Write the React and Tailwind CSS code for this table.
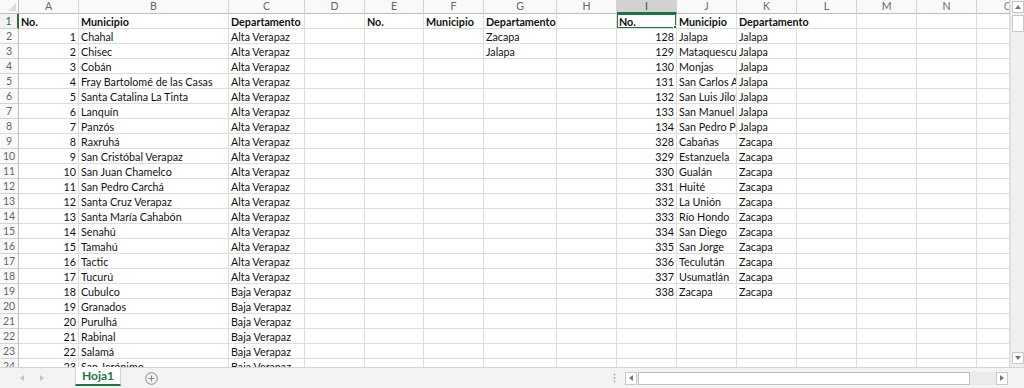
import React from "react";

const COLS = ["A","B","C","D","E","F","G","H","I","J","K","L","M","N","O"];

const left = [
  ["Chahal","Alta Verapaz"],["Chisec","Alta Verapaz"],["Cobán","Alta Verapaz"],
  ["Fray Bartolomé de las Casas","Alta Verapaz"],["Santa Catalina La Tinta","Alta Verapaz"],
  ["Lanquín","Alta Verapaz"],["Panzós","Alta Verapaz"],["Raxruhá","Alta Verapaz"],
  ["San Cristóbal Verapaz","Alta Verapaz"],["San Juan Chamelco","Alta Verapaz"],
  ["San Pedro Carchá","Alta Verapaz"],["Santa Cruz Verapaz","Alta Verapaz"],
  ["Santa María Cahabón","Alta Verapaz"],["Senahú","Alta Verapaz"],["Tamahú","Alta Verapaz"],
  ["Tactic","Alta Verapaz"],["Tucurú","Alta Verapaz"],["Cubulco","Baja Verapaz"],
  ["Granados","Baja Verapaz"],["Purulhá","Baja Verapaz"],["Rabinal","Baja Verapaz"],
  ["Salamá","Baja Verapaz"],["San Jerónimo","Baja Verapaz"],
];

const right = [
  [128,"Jalapa","Jalapa"],[129,"Mataquescuintla","Jalapa"],[130,"Monjas","Jalapa"],
  [131,"San Carlos Alzatate","Jalapa"],[132,"San Luis Jilotepeque","Jalapa"],
  [133,"San Manuel Chaparrón","Jalapa"],[134,"San Pedro Pinula","Jalapa"],
  [328,"Cabañas","Zacapa"],[329,"Estanzuela","Zacapa"],[330,"Gualán","Zacapa"],
  [331,"Huité","Zacapa"],[332,"La Unión","Zacapa"],[333,"Río Hondo","Zacapa"],
  [334,"San Diego","Zacapa"],[335,"San Jorge","Zacapa"],[336,"Teculután","Zacapa"],
  [337,"Usumatlán","Zacapa"],[338,"Zacapa","Zacapa"],
];

function buildRows() {
  const rows = [];
  for (let r = 1; r <= 24; r++) rows.push({});
  const h = rows[0];
  h.A = { v: "No.", b: true }; h.B = { v: "Municipio", b: true }; h.C = { v: "Departamento", b: true };
  h.E = { v: "No.", b: true }; h.F = { v: "Municipio", b: true }; h.G = { v: "Departamento", b: true };
  h.I = { v: "No.", b: true }; h.J = { v: "Municipio", b: true }; h.K = { v: "Departamento", b: true, over: true };
  left.forEach((d, i) => {
    const row = rows[i + 1];
    row.A = { v: String(i + 1), n: true };
    row.B = { v: d[0] };
    row.C = { v: d[1] };
  });
  rows[1].G = { v: "Zacapa" };
  rows[2].G = { v: "Jalapa" };
  right.forEach((d, i) => {
    const row = rows[i + 1];
    row.I = { v: String(d[0]), n: true };
    row.J = { v: d[1] };
    row.K = { v: d[2] };
  });
  return rows;
}

const ROWS = buildRows();
const FONT = { fontFamily: "Lato, 'Noto Sans', sans-serif" };

function Cell({ data, col, row }) {
  const selected = col === "I" && row === 1;
  const over = data && data.over;
  return (
    <div
      className={
        "relative h-[15px] border-b border-[#dadcdd] flex items-end text-[10.75px] leading-[13px] text-[#111] whitespace-nowrap " +
        (over ? "overflow-visible z-10 " : "overflow-hidden border-r ") +
        (data && data.n ? "justify-end pr-[2px] " : "pl-[2px] ") +
        (data && data.b ? "font-bold " : "")
      }
    >
      {data ? data.v : null}
      {selected && (
        <div className="absolute -left-[1px] -top-[1px] w-[61px] h-[16px] border-2 border-[#217346] pointer-events-none">
          <div className="absolute -right-[4px] -bottom-[4px] w-[6px] h-[6px] bg-[#217346] border border-white" />
        </div>
      )}
    </div>
  );
}

function ColHeader({ c }) {
  const sel = c === "I";
  return (
    <div
      className={
        "h-[14px] flex items-center justify-center text-[10.5px] leading-none border-r border-[#d4d4d4] overflow-hidden " +
        (sel
          ? "bg-[#d2d2d2] text-[#1e5b36] border-b-2 border-b-[#217346]"
          : "bg-[#f9f9f9] text-[#666] border-b border-b-[#bdbdbd]")
      }
    >
      {c === "O" ? <span className="-mr-[30px] text-[#888]">O</span> : c}
    </div>
  );
}

function RowHeader({ r }) {
  const sel = r === 1;
  return (
    <div
      className={
        "h-[15px] flex items-end justify-center pb-[1px] text-[10.5px] leading-[12px] border-b border-[#d4d4d4] " +
        (sel
          ? "bg-[#f3f3f3] text-[#217346] border-r-2 border-r-[#217346]"
          : "bg-[#f9f9f9] text-[#666] border-r border-r-[#bdbdbd]")
      }
    >
      {r}
    </div>
  );
}

export default function App() {
  return (
    <div className="w-[1024px] h-[388px] bg-white overflow-hidden flex flex-col" style={FONT}>
      <div className="flex h-[367px] overflow-hidden">
        <div className="w-[1010px] overflow-hidden">
          <div className="grid grid-cols-[19px_60px_150px_76px_60px_59px_60px_73px_60px_60px_60px_60px_60px_60px_60px_33px]">
            <div className="h-[14px] bg-[#f9f9f9] border-r border-b border-[#bdbdbd] relative">
              <div className="absolute right-[2px] bottom-[2px] w-0 h-0 border-l-[8px] border-l-transparent border-b-[8px] border-b-[#dcdcdc]" />
            </div>
            {COLS.map((c) => (
              <ColHeader key={c} c={c} />
            ))}
            {ROWS.map((row, i) => (
              <React.Fragment key={i}>
                <RowHeader r={i + 1} />
                {COLS.map((c) => (
                  <Cell key={c} data={row[c]} col={c} row={i + 1} />
                ))}
              </React.Fragment>
            ))}
          </div>
        </div>
        <div className="w-[14px] bg-[#f0f0f0] border-l border-[#e3e3e3] flex flex-col items-center">
          <div className="w-[12px] h-[12px] mt-[1px] bg-white border border-[#c8c8c8] flex items-center justify-center">
            <svg width="6" height="4" viewBox="0 0 6 4"><path d="M0 4 L3 0 L6 4 Z" fill="#777" /></svg>
          </div>
          <div className="w-[12px] h-[17px] mt-[2px] bg-white border border-[#c8c8c8]" />
          <div className="flex-1" />
          <div className="w-[12px] h-[12px] mb-[3px] bg-white border border-[#c8c8c8] flex items-center justify-center">
            <svg width="6" height="4" viewBox="0 0 6 4"><path d="M0 0 L3 4 L6 0 Z" fill="#777" /></svg>
          </div>
        </div>
      </div>
      <div className="h-[21px] bg-[#f3f3f3] border-t border-[#d4d4d4] flex items-start relative">
        <div className="w-[75px] h-full flex items-center pl-[20px] gap-[16px]">
          <svg width="4" height="6" viewBox="0 0 4 6"><path d="M4 0 L0 3 L4 6 Z" fill="#c4c4c4" /></svg>
          <svg width="4" height="6" viewBox="0 0 4 6"><path d="M0 0 L4 3 L0 6 Z" fill="#c4c4c4" /></svg>
        </div>
        <div className="w-[46px] h-[19px] -mt-[1px] bg-white border-x border-[#d4d4d4] border-b-2 border-b-[#217346] flex items-center justify-center text-[12px] font-bold text-[#217346]">
          Hoja1
        </div>
        <div className="ml-[24px] h-full flex items-center">
          <svg width="13" height="13" viewBox="0 0 13 13">
            <circle cx="6.5" cy="6.5" r="5.8" fill="none" stroke="#8a8a8a" strokeWidth="1" />
            <path d="M6.5 3.5 V9.5 M3.5 6.5 H9.5" stroke="#8a8a8a" strokeWidth="1.1" />
          </svg>
        </div>
        <div className="flex-1" />
        <div className="h-full flex items-center mr-[9px]">
          <svg width="3" height="10" viewBox="0 0 3 10">
            <circle cx="1.5" cy="1.5" r="0.9" fill="#aaa" />
            <circle cx="1.5" cy="5" r="0.9" fill="#aaa" />
            <circle cx="1.5" cy="8.5" r="0.9" fill="#aaa" />
          </svg>
        </div>
        <div className="h-full flex items-center mr-[16px]">
          <div className="w-[383px] h-[13px] flex items-stretch">
            <div className="w-[12px] bg-white border border-[#c8c8c8] flex items-center justify-center">
              <svg width="4" height="6" viewBox="0 0 4 6"><path d="M4 0 L0 3 L4 6 Z" fill="#777" /></svg>
            </div>
            <div className="w-[332px] bg-white border border-[#c0c0c0] ml-[1px]" />
            <div className="flex-1 bg-[#ebebeb]" />
            <div className="w-[12px] bg-white border border-[#c8c8c8] flex items-center justify-center">
              <svg width="4" height="6" viewBox="0 0 4 6"><path d="M0 0 L4 3 L0 6 Z" fill="#777" /></svg>
            </div>
          </div>
        </div>
      </div>
    </div>
  );
}
